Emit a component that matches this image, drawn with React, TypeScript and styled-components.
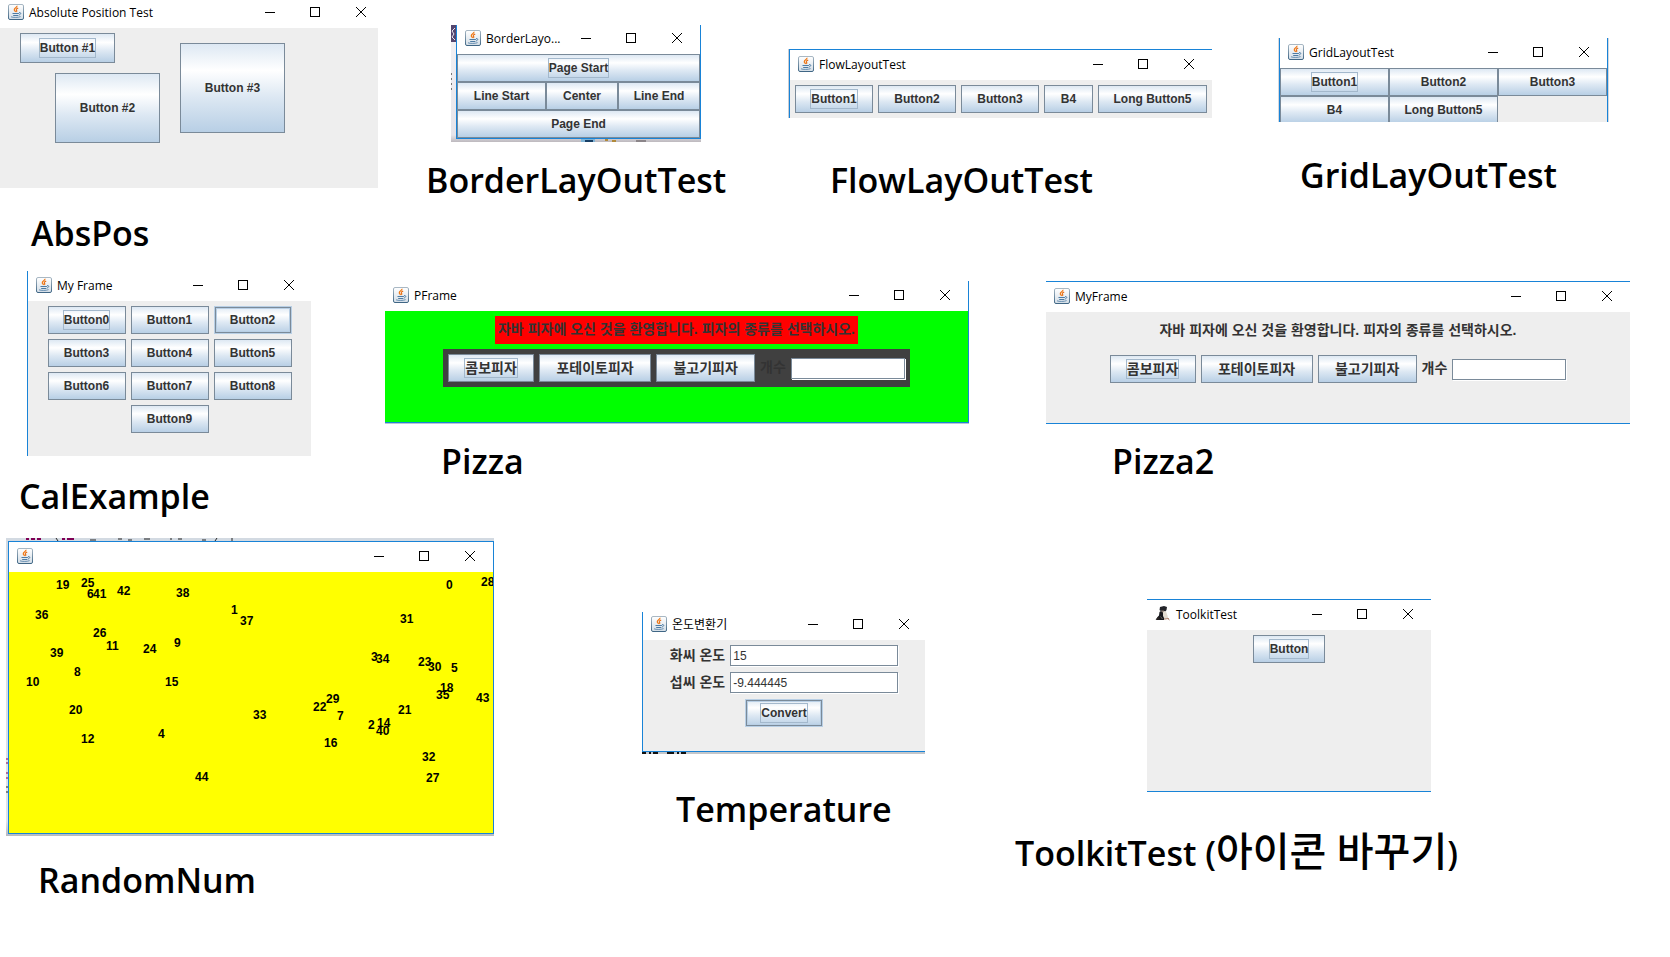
import React from "react";
import styled, { createGlobalStyle, css } from "styled-components";

const GlobalStyle = createGlobalStyle`
  *, *::before, *::after { box-sizing: border-box; }
  body {
    margin: 0;
    background: #fff;
    font-family: "Liberation Sans", "Noto Sans CJK KR", sans-serif;
  }
`;

const ACCENT = "#1883d7";

/* ---------- canvas, figures, captions ---------- */

const Board = styled.main`
  position: relative;
  width: 100%;
  min-height: 100vh;
  overflow: hidden;
`;

const Figure = styled.figure<{ $x: number; $y: number }>`
  position: absolute;
  left: ${(p) => p.$x}px;
  top: ${(p) => p.$y}px;
  margin: 0;
`;

const Caption = styled.figcaption<{ $gap: number; $indent: number }>`
  margin-top: ${(p) => p.$gap}px;
  margin-left: ${(p) => p.$indent}px;
  color: #000;
  font-family: "Open Sans", "Noto Sans CJK KR", sans-serif;
  font-size: 34px;
  font-weight: 600;
  line-height: 50px;
  white-space: nowrap;
`;

const Hangul = styled.span`
  font-size: 40px;
  font-weight: 500;
  line-height: 1;
`;

const Scrap = styled.div<{ $pad: string; $bg: string }>`
  position: relative;
  width: max-content;
  padding: ${(p) => p.$pad};
  background: ${(p) => p.$bg};
`;

const ScrapArt = styled.svg`
  position: absolute;
  inset: 0;
  display: block;
`;

/* ---------- window chrome ---------- */

const Frame = styled.section<{ $width: number; $edges: string }>`
  position: relative;
  display: flex;
  flex-direction: column;
  width: ${(p) => p.$width}px;
  border: 0 solid ${ACCENT};
  border-width: ${(p) => p.$edges};
  background: #fff;
  overflow: hidden;
`;

const TitleBar = styled.header<{ $height: number }>`
  display: flex;
  align-items: flex-end;
  gap: 5px;
  height: ${(p) => p.$height}px;
  padding: 0 0 8px 8px;
`;

const TitleText = styled.h2`
  flex: 1;
  min-width: 0;
  margin: 0;
  color: #000;
  font-family: "Open Sans", "Noto Sans CJK KR", sans-serif;
  font-size: 12px;
  font-weight: 400;
  line-height: 14px;
  white-space: nowrap;
`;

const Controls = styled.div<{ $cut: number }>`
  display: flex;
  flex: none;
  margin-right: -${(p) => p.$cut}px;
`;

const ControlButton = styled.button`
  display: flex;
  align-items: center;
  width: 45px;
  height: 16px;
  padding: 0 0 0 17px;
  border: 0;
  background: none;

  &:last-child {
    width: 46px;
    padding-left: 18px;
  }
`;

const IconSvg = styled.svg`
  display: block;
  flex: none;
`;

const JavaIcon = () => (
  <IconSvg width="16" height="16" viewBox="0 0 16 16" aria-hidden="true">
    <defs>
      <linearGradient id="cupPlate" x1="0" y1="0" x2="0" y2="1">
        <stop offset="0" stopColor="#ffffff" />
        <stop offset="1" stopColor="#d3dde6" />
      </linearGradient>
      <linearGradient id="cupEdge" x1="0" y1="0" x2="0" y2="1">
        <stop offset="0" stopColor="#a9b8c4" />
        <stop offset="1" stopColor="#3f6685" />
      </linearGradient>
    </defs>
    <rect x="0.5" y="0.5" width="15" height="15" rx="1.5" fill="url(#cupPlate)" stroke="url(#cupEdge)" />
    <path d="M8.9 1.8c.7 1.500-2.800 2.400-2.600 4 .1.900 1 1.300 1.400 2.100" fill="none" stroke="#f07c1a" strokeWidth="1.300" />
    <path d="M10.200 4c-1.300.6-2.300 1.200-1.700 2.100.5.700.6 1.100 0 1.900" fill="none" stroke="#e8690b" strokeWidth="1.100" />
    <path d="M4.500 9.500h6.400M5.200 11.500h5.200" stroke="#4d7ba3" strokeWidth="1" />
    <path d="M11 8.700c2-.6 2.600 1.300.2 2.300" fill="none" stroke="#4d7ba3" strokeWidth="1" />
    <path d="M3 12.800c2 .9 7.500.9 9.600-.2" fill="none" stroke="#5c87ab" strokeWidth="0.900" />
  </IconSvg>
);

const FigureIcon = () => (
  <IconSvg width="16" height="16" viewBox="0 0 16 16" aria-hidden="true">
    <path d="M5 1l4-1 3 1-.5 3-1 1.500h-4L4.500 4z" fill="#23242a" />
    <path d="M6 5l3 1 1 3-1 5H1l1.500-3L4 9.500 4.500 6z" fill="#17181c" />
    <path d="M0.500 13.500L3 11l2 2.500z" fill="#2b2422" />
    <path d="M8 5l3 .5 1.500 4 .5 3-3 1.500-2-4z" fill="#e4ddd2" />
    <path d="M6 4.500h3l-.5 1.500L7 6.500z" fill="#8d7f74" />
    <path d="M9 13l5-.5M12 12l2.500 2" stroke="#b58a78" strokeWidth="1" />
    <path d="M5.500 10.500l2 2.500" stroke="#6b6660" strokeWidth="1" />
  </IconSvg>
);

const Glyph = ({ d, crisp }: { d: string; crisp?: boolean }) => (
  <IconSvg
    width="10"
    height="10"
    viewBox="0 0 10 10"
    fill="none"
    stroke="#000"
    strokeWidth="1"
    shapeRendering={crisp ? "crispEdges" : "auto"}
    aria-hidden="true"
  >
    <path d={d} />
  </IconSvg>
);

type WindowProps = {
  title: string;
  width: number;
  edges?: string;
  bar?: number;
  cut?: number;
  icon?: React.ReactNode;
  children: React.ReactNode;
};

const AppWindow = ({ title, width, edges = "0", bar = 30, cut = 0, icon, children }: WindowProps) => (
  <Frame $width={width} $edges={edges}>
    <TitleBar $height={bar}>
      {icon ?? <JavaIcon />}
      <TitleText>{title}</TitleText>
      <Controls $cut={cut}>
        <ControlButton type="button" aria-label="Minimize">
          <Glyph d="M0 5.500h10" crisp />
        </ControlButton>
        <ControlButton type="button" aria-label="Maximize">
          <Glyph d="M0.500 0.500h9v9h-9z" crisp />
        </ControlButton>
        <ControlButton type="button" aria-label="Close">
          <Glyph d="M0 0l10 10M10 0l-10 10" />
        </ControlButton>
      </Controls>
    </TitleBar>
    {children}
  </Frame>
);

/* ---------- widgets ---------- */

const MetalButton = styled.button<{ $width?: number; $height?: number; $active?: boolean; $korean?: boolean }>`
  display: flex;
  align-items: center;
  justify-content: center;
  flex: none;
  width: ${(p) => (p.$width ? `${p.$width}px` : "auto")};
  height: ${(p) => p.$height ?? 28}px;
  padding: 0;
  border: 1px solid #7a8a99;
  border-radius: 0;
  background: linear-gradient(#dde8f3 0%, #ffffff 30%, #dde8f3 60%, #b8cfe5 100%);
  color: #333;
  font-family: "Liberation Sans", "Noto Sans CJK KR", sans-serif;
  font-size: ${(p) => (p.$korean ? 14 : 12)}px;
  font-weight: 700;
  line-height: 18px;
  white-space: nowrap;

  ${(p) =>
    p.$active &&
    css`
      border-color: #b8cfe5;
      box-shadow: inset 0 0 0 1px #7a8a99, inset 0 0 0 2px #b8cfe5;
    `}
`;

const FocusMark = styled.span`
  border: 1px solid #a3b8cc;
`;

type JButtonProps = {
  label: string;
  width?: number;
  height?: number;
  focused?: boolean;
  active?: boolean;
  korean?: boolean;
};

const JButton = ({ label, width, height, focused, active, korean }: JButtonProps) => (
  <MetalButton type="button" $width={width} $height={height} $active={active} $korean={korean}>
    {focused ? <FocusMark>{label}</FocusMark> : label}
  </MetalButton>
);

const TextBox = styled.input<{ $width: number }>`
  width: ${(p) => p.$width}px;
  height: 21px;
  margin: 0;
  padding: 0 2px;
  border: 1px solid #7a8a99;
  border-radius: 0;
  outline: 0;
  background: #fff;
  box-shadow: 1px 1px 0 #fff;
  color: #333;
  font: 400 12px/18px "Liberation Sans", sans-serif;
`;

const FieldLabel = styled.label`
  padding-bottom: 2px;
  color: #333;
  font-size: 14px;
  font-weight: 700;
  line-height: 18px;
  white-space: nowrap;
`;

/* ---------- window bodies ---------- */

const FreePane = styled.div<{ $height: number; $bg: string }>`
  position: relative;
  height: ${(p) => p.$height}px;
  background: ${(p) => p.$bg};
  overflow: hidden;
`;

const Placed = styled.div<{ $x: number; $y: number }>`
  position: absolute;
  left: ${(p) => p.$x}px;
  top: ${(p) => p.$y}px;
`;

const BorderPane = styled.div`
  display: grid;
  grid-template-columns: 89fr 72fr 82fr;

  > :first-child,
  > :last-child {
    grid-column: 1 / -1;
  }
`;

const FlowPane = styled.div<{ $height: number }>`
  display: flex;
  flex-wrap: wrap;
  align-content: flex-start;
  justify-content: center;
  gap: 5px;
  height: ${(p) => p.$height}px;
  padding: 5px;
  background: #eee;
`;

const GridPane = styled.div`
  display: grid;
  grid-template-columns: repeat(3, 1fr);
  height: 54px;
  background: #eee;
  overflow: hidden;
`;

const PizzaPane = styled.div<{ $bg: string }>`
  display: flex;
  flex-direction: column;
  align-items: center;
  gap: 5px;
  height: 111px;
  padding-top: 5px;
  background: ${(p) => p.$bg};
`;

const Notice = styled.p<{ $bg: string }>`
  margin: 0;
  padding: 4px 3px 6px;
  background: ${(p) => p.$bg};
  color: #333;
  font-size: 14px;
  font-weight: 700;
  line-height: 18px;
  white-space: nowrap;
`;

const OrderRow = styled.div<{ $bg: string }>`
  display: flex;
  align-items: center;
  gap: 5px;
  padding: 5px;
  background: ${(p) => p.$bg};
`;

const FormPane = styled.form`
  display: flex;
  flex-direction: column;
  align-items: center;
  gap: 6px;
  height: 111px;
  padding-top: 5px;
  background: #eee;
`;

const FormRow = styled.div`
  display: flex;
  align-items: center;
  gap: 5px;
`;

const NumberTag = styled.span<{ $x: number; $y: number }>`
  position: absolute;
  left: ${(p) => p.$x}px;
  top: ${(p) => p.$y}px;
  color: #000;
  font-size: 12px;
  font-weight: 700;
  line-height: 14px;
`;

const NUMBERS: Array<[number, number, number]> = [
  [19, 47, 6], [25, 72, 4], [6, 78, 15], [41, 84, 15], [42, 108, 12], [38, 167, 14],
  [0, 437, 6], [28, 472, 3], [1, 222, 31], [37, 231, 42], [31, 391, 40], [36, 26, 36],
  [26, 84, 54], [11, 97, 67], [24, 134, 70], [9, 165, 64], [39, 41, 74], [8, 65, 93],
  [3, 362, 78], [34, 367, 80], [23, 409, 83], [30, 419, 88], [5, 442, 89], [10, 17, 103],
  [15, 156, 103], [18, 431, 109], [35, 427, 116], [43, 467, 119], [29, 317, 120], [22, 304, 128],
  [7, 328, 137], [21, 389, 131], [20, 60, 131], [33, 244, 136], [2, 359, 146], [14, 368, 144],
  [40, 367, 152], [12, 72, 160], [4, 149, 155], [16, 315, 164], [32, 413, 178], [27, 417, 199],
  [44, 186, 198],
];

const PizzaOrder = ({ id, pane, notice, row }: { id: string; pane: string; notice: string; row: string }) => (
  <PizzaPane $bg={pane}>
    <Notice $bg={notice}>자바 피자에 오신 것을 환영합니다. 피자의 종류를 선택하시오.</Notice>
    <OrderRow $bg={row}>
      <JButton label="콤보피자" width={86} focused korean />
      <JButton label="포테이토피자" width={112} korean />
      <JButton label="불고기피자" width={99} korean />
      <FieldLabel htmlFor={id}>개수</FieldLabel>
      <TextBox id={id} type="text" $width={114} />
    </OrderRow>
  </PizzaPane>
);

export default function App() {
  return (
    <>
      <GlobalStyle />
      <Board>
        <Figure $x={0} $y={0}>
          <AppWindow title="Absolute Position Test" width={378} bar={28} cut={6}>
            <FreePane $height={160} $bg="#eee">
              <Placed $x={20} $y={5}>
                <JButton label="Button #1" width={95} height={30} focused />
              </Placed>
              <Placed $x={55} $y={45}>
                <JButton label="Button #2" width={105} height={70} />
              </Placed>
              <Placed $x={180} $y={15}>
                <JButton label="Button #3" width={105} height={90} />
              </Placed>
            </FreePane>
          </AppWindow>
          <Caption $gap={20} $indent={31}>AbsPos</Caption>
        </Figure>

        <Figure $x={451} $y={25}>
          <Scrap $pad="0 0 3px 5px" $bg="linear-gradient(#f3f2f5, #e6e4ea 94%, #bdb9be)">
            <ScrapArt width="250" height="117" viewBox="0 0 250 117" aria-hidden="true">
              <path d="M0 0h5v17h-5z" fill="#54466f" />
              <path d="M4 3l-3 3 2 3-2 3 3 3" stroke="#e8e4f0" fill="none" />
              <path d="M0 49h1M0 54h1M0 59h1M0 64h1" stroke="#777" strokeWidth="2" />
              <path d="M130 114h14v3h-14z" fill="#7fb4d6" />
              <path d="M134 115h8v2h-8z" fill="#173f66" />
              <path d="M154 115h3M161 116h4" stroke="#b18a3a" strokeWidth="2" />
              <path d="M185 116h10" stroke="#8b8589" strokeWidth="2" />
            </ScrapArt>
            <AppWindow title="BorderLayo..." width={245} edges="0 1px 1px 1px" bar={29}>
              <BorderPane>
                <JButton label="Page Start" focused />
                <JButton label="Line Start" />
                <JButton label="Center" />
                <JButton label="Line End" />
                <JButton label="Page End" />
              </BorderPane>
            </AppWindow>
          </Scrap>
          <Caption $gap={13} $indent={-25}>BorderLayOutTest</Caption>
        </Figure>

        <Figure $x={788} $y={49}>
          <Scrap $pad="0 0 0 1px" $bg="#c9ccd2">
            <AppWindow title="FlowLayoutTest" width={423} edges="1px 0 0 1px">
              <FlowPane $height={38}>
                <JButton label="Button1" width={78} focused />
                <JButton label="Button2" width={78} />
                <JButton label="Button3" width={78} />
                <JButton label="B4" width={49} />
                <JButton label="Long Button5" width={109} />
              </FlowPane>
            </AppWindow>
          </Scrap>
          <Caption $gap={37} $indent={42}>FlowLayOutTest</Caption>
        </Figure>

        <Figure $x={1278} $y={38}>
          <Scrap $pad="0 1px" $bg="#d5d8dd">
            <AppWindow title="GridLayoutTest" width={329} edges="0 1px">
              <GridPane>
                <JButton label="Button1" focused />
                <JButton label="Button2" />
                <JButton label="Button3" />
                <JButton label="B4" />
                <JButton label="Long Button5" />
              </GridPane>
            </AppWindow>
          </Scrap>
          <Caption $gap={28} $indent={22}>GridLayOutTest</Caption>
        </Figure>

        <Figure $x={27} $y={271}>
          <AppWindow title="My Frame" width={284} edges="0 0 0 1px" cut={1}>
            <FlowPane $height={155}>
              {Array.from({ length: 10 }, (_, i) => (
                <JButton key={i} label={`Button${i}`} width={78} focused={i === 0} active={i === 2} />
              ))}
            </FlowPane>
          </AppWindow>
          <Caption $gap={15} $indent={-8}>CalExample</Caption>
        </Figure>

        <Figure $x={385} $y={281}>
          <Scrap $pad="0 0 1px" $bg="#b9c4cf">
            <AppWindow title="PFrame" width={584} edges="0 1px 1px 0">
              <PizzaOrder id="pizza-count" pane="#00ff00" notice="#ff0000" row="#404040" />
            </AppWindow>
          </Scrap>
          <Caption $gap={12} $indent={56}>Pizza</Caption>
        </Figure>

        <Figure $x={1046} $y={281}>
          <AppWindow title="MyFrame" width={584} edges="1px 0">
            <PizzaOrder id="pizza2-count" pane="#eee" notice="#eee" row="#eee" />
          </AppWindow>
          <Caption $gap={12} $indent={66}>Pizza2</Caption>
        </Figure>

        <Figure $x={6} $y={538}>
          <Scrap $pad="3px 0 2px 2px" $bg="linear-gradient(#d3dae2, #dfe4ea 95%, #b5bac0)">
            <ScrapArt width="488" height="298" viewBox="0 0 488 298" aria-hidden="true">
              <path d="M20 1h3M25 1h4M31 1h4M56 1h3M61 1h7" stroke="#7f0055" strokeWidth="2" />
              <path d="M50 0l2 3M84 2h6M112 1h4M122 2h4M138 1h6M164 1h2M172 1h4M196 2h4M211 0l-2 3M226 0v3" stroke="#222" />
              <path d="M0 221h2M0 225h2M0 235h2M0 240h2" stroke="#7f0055" strokeWidth="1" />
              <path d="M0 249h2M0 254h2" stroke="#222" />
            </ScrapArt>
            <AppWindow title="" width={486} edges="1px">
              <FreePane $height={261} $bg="#ffff00">
                {NUMBERS.map(([n, x, y]) => (
                  <NumberTag key={n} $x={x} $y={y}>{n}</NumberTag>
                ))}
              </FreePane>
            </AppWindow>
          </Scrap>
          <Caption $gap={19} $indent={32}>RandomNum</Caption>
        </Figure>

        <Figure $x={642} $y={612}>
          <Scrap $pad="0 0 2px" $bg="#c3c6ca">
            <ScrapArt width="283" height="142" viewBox="0 0 283 142" aria-hidden="true">
              <path d="M0 141h4M7 141h2M11 141h5M25 141h7M35 141h2M39 141h5" stroke="#111" strokeWidth="2" />
            </ScrapArt>
            <AppWindow title="온도변환기" width={283} edges="0 0 1px 1px" bar={28} cut={2}>
              <FormPane onSubmit={(e) => e.preventDefault()}>
                <FormRow>
                  <FieldLabel htmlFor="fahrenheit">화씨 온도</FieldLabel>
                  <TextBox id="fahrenheit" type="text" defaultValue="15" $width={168} />
                </FormRow>
                <FormRow>
                  <FieldLabel htmlFor="celsius">섭씨 온도</FieldLabel>
                  <TextBox id="celsius" type="text" defaultValue="-9.444445" $width={168} />
                </FormRow>
                <JButton label="Convert" width={78} focused active />
              </FormPane>
            </AppWindow>
          </Scrap>
          <Caption $gap={30} $indent={34}>Temperature</Caption>
        </Figure>

        <Figure $x={1147} $y={599}>
          <AppWindow title="ToolkitTest" width={284} edges="1px 0" icon={<FigureIcon />}>
            <FlowPane $height={161}>
              <JButton label="Button" width={72} focused />
            </FlowPane>
          </AppWindow>
          <Caption $gap={36} $indent={-132}>
            ToolkitTest (<Hangul>아이콘 바꾸기</Hangul>)
          </Caption>
        </Figure>
      </Board>
    </>
  );
}
